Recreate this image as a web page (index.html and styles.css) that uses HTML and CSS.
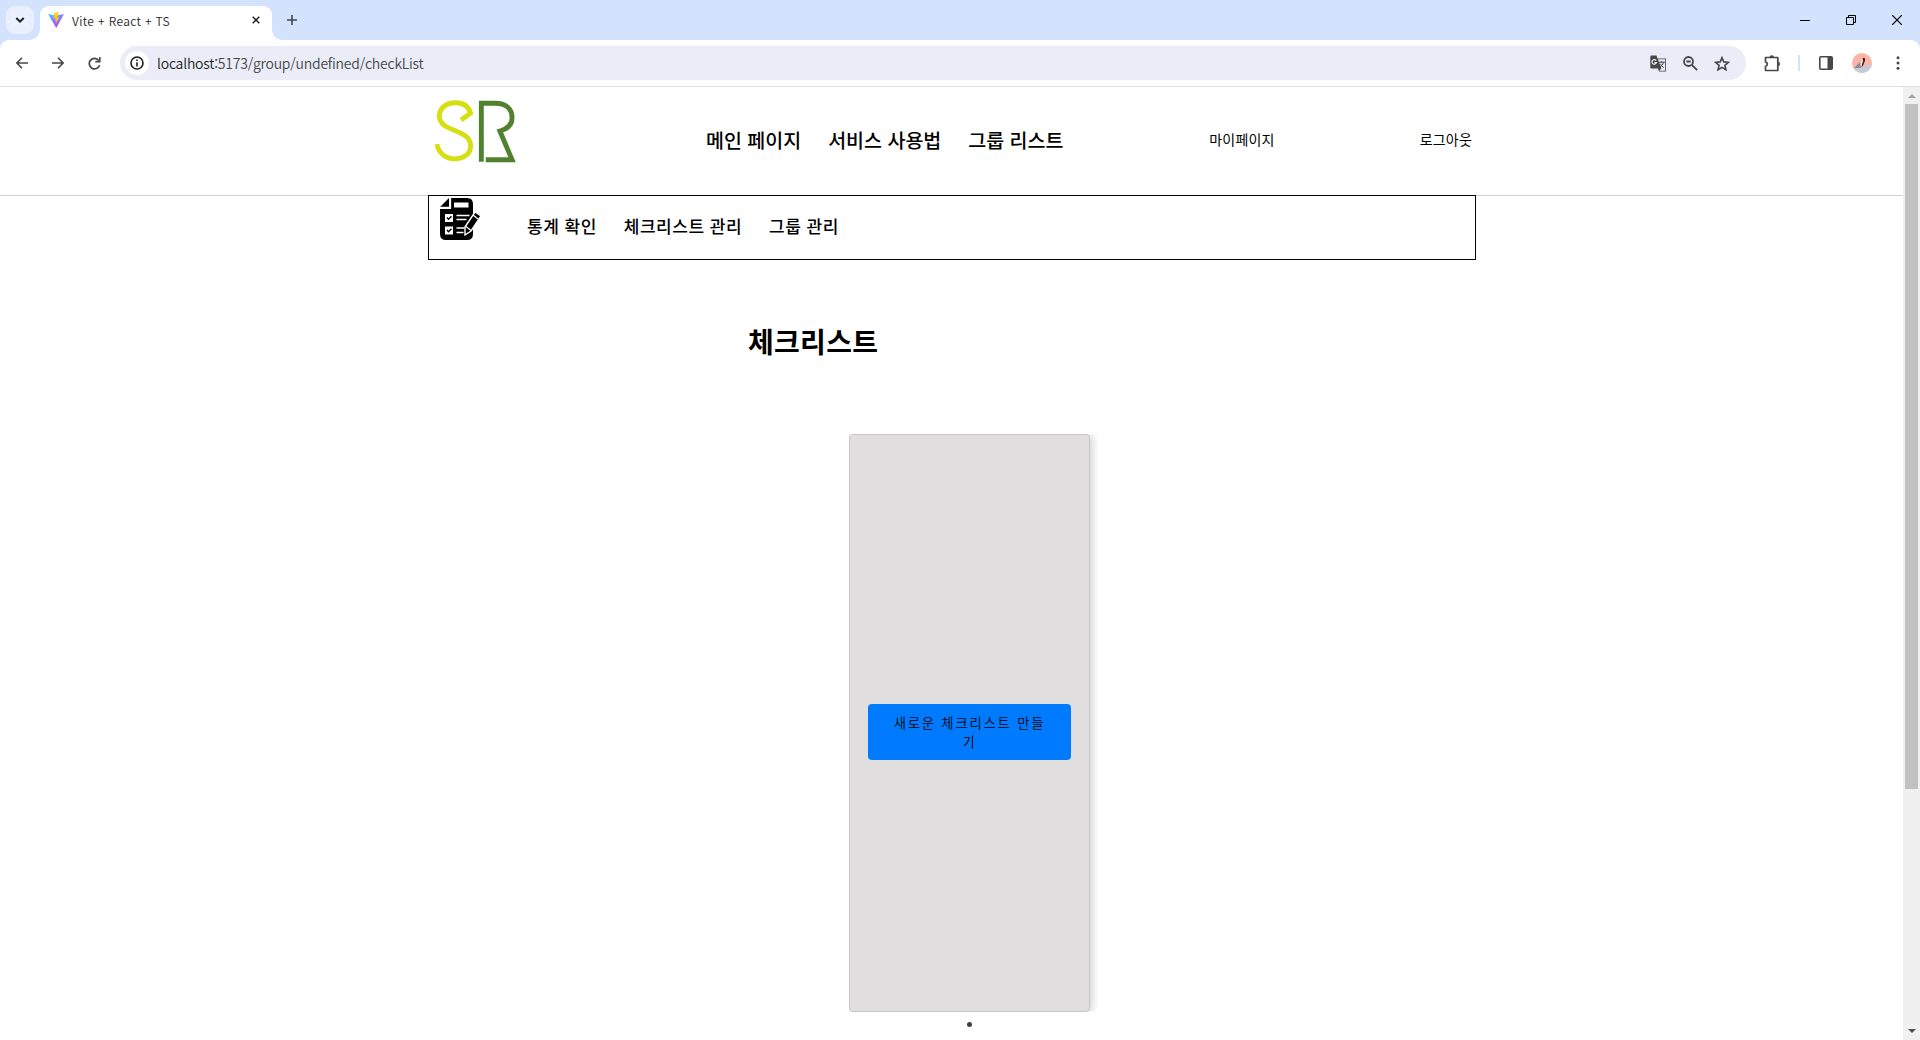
FILE: index.html
```html
<!DOCTYPE html>
<html lang="ko">
<head>
<meta charset="utf-8">
<title>Vite + React + TS</title>
<link rel="stylesheet" href="styles.css">
</head>
<body>
<div class="browser">
  <div class="tabstrip">
    <div class="tab-search"><svg width="10" height="6" viewBox="0 0 10 6"><path d="M1.3 1l3.7 3.6L8.7 1" fill="none" stroke="#1f1f1f" stroke-width="2"/></svg></div>
    <div class="tab">
      <svg class="favicon" width="16" height="16" viewBox="0 0 32 32"><defs><linearGradient id="v" x1="0" y1="0" x2=".6" y2="1"><stop offset="0" stop-color="#41d1ff"/><stop offset="1" stop-color="#bd34fe"/></linearGradient><linearGradient id="y" x1="0" y1="0" x2="0" y2="1"><stop offset="0" stop-color="#ffdd35"/><stop offset="1" stop-color="#ffa800"/></linearGradient></defs><path d="M0 4l16 3 16-3-15.500 28z" fill="url(#v)"/><path d="M22 0L12 2l-.7 11 4-.8-1.200 6 3-1L15 25l8-14-4 .7z" fill="url(#y)"/></svg>
      <span class="tab-title">Vite + React + TS</span>
      <svg class="tab-close" width="8" height="8" viewBox="0 0 8 8"><path d="M.7.700l6.600 6.600M7.300.700L.7 7.300" stroke="#1f1f1f" stroke-width="1.500"/></svg>
    </div>
    <svg class="new-tab" width="10" height="10" viewBox="0 0 10 10"><path d="M5 0v10M0 5h10" stroke="#474747" stroke-width="1.600"/></svg>
    <div class="window-buttons">
      <svg width="10" height="10" viewBox="0 0 10 10"><path d="M0 5.500h10" stroke="#000"/></svg>
      <svg width="10" height="10" viewBox="0 0 10 10"><path d="M.5 2.500h7v7h-7zM2.500 2.500v-2h7v7h-2" fill="none" stroke="#000"/></svg>
      <svg width="10" height="10" viewBox="0 0 10 10"><path d="M0 0l10 10M10 0L0 10" stroke="#000" stroke-width="1.200"/></svg>
    </div>
  </div>
  <div class="toolbar">
    <div class="nav-icons">
      <svg width="12" height="12" viewBox="0 0 12 12"><path d="M12 6H1.200M6 .7L.9 6 6 11.300" fill="none" stroke="#474747" stroke-width="1.600"/></svg>
      <svg width="12" height="12" viewBox="0 0 12 12"><path d="M0 6h10.800M6 .7L11.100 6 6 11.300" fill="none" stroke="#474747" stroke-width="1.600"/></svg>
      <svg width="13" height="13" viewBox="0 0 13 13"><path d="M11.600 8.300A5.300 5.300 0 1 1 10.800 3.400" fill="none" stroke="#474747" stroke-width="1.700"/><path d="M12.600 0v5.400H7.300V3.800H11V0z" fill="#474747"/></svg>
    </div>
    <div class="omnibox">
      <div class="site-info"><svg width="14" height="14" viewBox="0 0 14 14"><circle cx="7" cy="7" r="6" fill="none" stroke="#1f1f1f" stroke-width="1.600"/><path d="M7 6.200v4.300M7 3.500v1.600" stroke="#1f1f1f" stroke-width="1.600"/></svg></div>
      <span class="url"><b>localhost:</b>5173/group/undefined/checkList</span>
      <div class="page-actions">
        <svg width="17" height="17" viewBox="0 0 17 17"><path d="M1.500.500h5l1 3H16v13H9l-1-3H1.500q-1.200 0-1.200-1.200V1.700Q.3.500 1.500.500z" fill="#474747"/><path d="M8 4.200h7.200v11.500H9.300l2-2.200z" fill="#eaedf7"/><path d="M6.200 5.600a2.300 2.300 0 1 0 .3 2H4.500" fill="none" stroke="#eaedf7" stroke-width="1.200"/><path d="M9 7.200h6M11.700 6v1.200M13.700 7.200q-.8 3-3.700 5M10.300 8.700q1 2.200 3.500 4" fill="none" stroke="#474747"/></svg>
        <svg width="15" height="15" viewBox="0 0 15 15"><circle cx="5.500" cy="5.500" r="4.500" fill="none" stroke="#474747" stroke-width="1.800"/><path d="M3.300 5.500h4.400M8.800 8.800l5.400 5.400" stroke="#474747" stroke-width="1.800"/></svg>
        <svg width="16" height="15" viewBox="0 0 16 15"><path d="M8 1.700l1.800 4.200 4.600.4-3.500 3 1.100 4.500L8 11.400l-4 2.400 1.100-4.500-3.500-3 4.600-.4z" fill="none" stroke="#474747" stroke-width="1.600"/></svg>
      </div>
    </div>
    <svg class="extensions" width="17" height="17" viewBox="0 0 17 17"><path d="M1.500 2.500h12.300v13H1.500v-4.200a2.300 2.300 0 0 0 0-4.500z" fill="none" stroke="#474747" stroke-width="1.700" stroke-linejoin="round"/><path d="M5.700 2.500a2 2 0 0 1 4 0zM13.800 6.900a2 2 0 0 1 0 4z" fill="#474747" stroke="#474747" stroke-width=".6"/></svg>
    <span class="divider"></span>
    <svg class="side-panel" width="14" height="14" viewBox="0 0 14 14"><rect x=".8" y=".8" width="12.400" height="12.400" rx="1" fill="none" stroke="#474747" stroke-width="1.600"/><path d="M8.500 1H13v12H8.500z" fill="#474747"/></svg>
    <svg class="avatar" width="20" height="20" viewBox="0 0 20 20"><clipPath id="c"><circle cx="10" cy="10" r="10"/></clipPath><g clip-path="url(#c)"><path fill="#fdb5a8" d="M0 0h20v20H0z"/><path fill="#c5cad9" d="M0 14l8 1 12-4v9H0z"/><path fill="#8d8c94" d="M2 15l6-6 1 6z"/><path d="M10.500 5.500q2-1.500 2.500.500.300 2-1 4-.5 2.500-2.500 4.500 0-2.500 1-4.500 1.300-2 .5-3.500z" fill="#222"/><path d="M9.300 8q.7 2-.3 5" stroke="#eee" fill="none"/></g></svg>
    <svg class="menu" width="4" height="14" viewBox="0 0 4 14"><g fill="#474747"><circle cx="2" cy="1.700" r="1.500"/><circle cx="2" cy="7" r="1.500"/><circle cx="2" cy="12.300" r="1.500"/></g></svg>
  </div>
</div>
<div class="viewport">
  <div class="page">
    <header class="header">
      <div class="header-inner">
        <svg class="logo" width="84" height="66" viewBox="0 0 84 66"><path d="M27.700 21.200l9.700-7C35.500 7 29.500 3.500 22 3.500 13 3.500 5.500 8.500 5.500 17.500c0 16.500 32 12 32 30.500 0 7.500-6.500 13-16 13S4.500 55 3 46" fill="none" stroke="#d5df12" stroke-width="5"/><path d="M48.500 64V4h14c11 0 17.500 5.500 17.500 15 0 7-5 11.500-12.500 13.500L80 62H53" fill="none" stroke="#4f812f" stroke-width="5"/></svg>
        <nav class="main-nav"><a>메인 페이지</a><a>서비스 사용법</a><a>그룹 리스트</a></nav>
        <div class="account"><a>마이페이지</a><a>로그아웃</a></div>
      </div>
    </header>
    <div class="group-bar">
      <svg class="group-icon" width="41" height="42" viewBox="0 0 41 42"><path d="M11 0h16q6 0 6 6v30q0 6-6 6H6q-6 0-6-6V11h11z" fill="#000"/><path d="M0 9L9 0v9z" fill="#000"/><path d="M10.500 0v9.500H0" fill="none" stroke="#fff" stroke-width="1.300"/><path d="M14 4.500h14.500v5H14zM5 16h8v8H5zM5 28.500h8v8H5z" fill="#fff"/><path d="M7 19.500l1.500 1.700 3-3M7 32l1.500 1.700 3-3" fill="none" stroke="#000" stroke-width="1.400"/><path d="M16.500 17.500h13M16.500 21.500h10M16.500 30h8M16.500 34.500h7" stroke="#fff" stroke-width="1.300"/><path d="M25 29L35 14l6 4-10 15-6 4z" fill="#000" stroke="#fff" stroke-width="1.400"/><path d="M26 28.500l5 4M33 17l5 4" stroke="#fff" stroke-width="1.200"/></svg>
      <nav class="group-nav"><a>통계 확인</a><a>체크리스트 관리</a><a>그룹 관리</a></nav>
    </div>
    <main class="content">
      <h1 class="title">체크리스트</h1>
      <div class="slide"><div class="card"><button class="create">새로운 체크리스트 만들<br>기</button></div></div>
      <div class="dot"></div>
    </main>
  </div>
  <div class="scrollbar">
    <svg width="8" height="4" viewBox="0 0 8 4"><path d="M0 4l4-4 4 4z" fill="#a3a3a3"/></svg>
    <div class="thumb"></div>
    <svg class="down" width="8" height="4" viewBox="0 0 8 4"><path d="M0 0l4 4 4-4z" fill="#505050"/></svg>
  </div>
</div>
</body>
</html>
```
FILE: styles.css
```css
* { box-sizing: border-box; }
body { margin: 0; width: 1920px; height: 1040px; overflow: hidden; background: #fff; color: #000; font-family: "Noto Sans CJK KR", "Noto Sans", sans-serif; }
svg { display: block; flex: none; }
a { white-space: nowrap; }

.browser { background: #d3e3fd; height: 87px; }
.tabstrip { display: flex; height: 40px; align-items: center; }
.tab-search { width: 28px; height: 28px; margin-left: 6px; border-radius: 9px; background: #e9f1fe; display: flex; align-items: center; justify-content: center; }
.tab { position: relative; display: flex; align-items: center; width: 232px; height: 34px; margin: 6px 0 0 6px; padding: 0 12px 6px 8px; border-radius: 9px 9px 0 0; background: #fff; }
.tab::before, .tab::after { content: ""; position: absolute; bottom: 0; width: 10px; height: 10px; }
.tab::before { left: -10px; background: radial-gradient(circle at 0 0, transparent 9.500px, #fff 10px); }
.tab::after { right: -10px; background: radial-gradient(circle at 100% 0, transparent 9.500px, #fff 10px); }
.tab-title { margin-left: 8px; font-size: 12px; font-weight: 350; color: #1f1f1f; letter-spacing: .35px; white-space: nowrap; }
.tab-close { margin-left: auto; }
.new-tab { margin-left: 15px; }
.window-buttons { display: flex; gap: 36px; margin-left: auto; padding-right: 18px; }

.toolbar { display: flex; align-items: center; height: 47px; padding-left: 16px; padding-right: 20px; background: #fff; border-bottom: 1px solid #dcdfe3; border-radius: 9px 9px 0 0; }
.nav-icons { display: flex; gap: 24px; align-items: center; width: 104px; }
.omnibox { display: flex; align-items: center; width: 1626px; height: 34px; padding: 0 16px 0 5px; border-radius: 17px; background: #eaedf7; }
.site-info { width: 24px; height: 24px; border-radius: 50%; background: #fff; display: flex; align-items: center; justify-content: center; }
.url { margin-left: 8px; font-size: 14px; font-weight: 350; color: #474747; white-space: nowrap; letter-spacing: -.22px; }
.url b { font-weight: inherit; color: #1f1f1f; }
.page-actions { display: flex; align-items: center; gap: 16px; margin-left: auto; }
.extensions { margin-left: 18px; }
.divider { width: 2px; height: 16px; margin-left: 17px; background: #d3e3fd; }
.side-panel { margin-left: 19px; }
.avatar { margin-left: 19px; }
.menu { margin-left: auto; }

.viewport { display: flex; height: 953px; }
.page { flex: 1; background: #fff; }
.header { height: 109px; border-bottom: 1px solid #d3d3d3; }
.header-inner { display: flex; width: 1048px; height: 108px; margin-left: 428px; padding-bottom: 4px; align-items: center; }
.logo { width: 82px; height: 65px; margin: -15px 0 0 6px; }
.main-nav { display: flex; gap: 27px; margin-left: 190px; font-size: 19.500px; font-weight: 500; }
.account { display: flex; margin-left: auto; gap: 145px; padding-right: 4px; font-size: 14px; letter-spacing: .2px; }

.group-bar { display: flex; width: 1048px; height: 65px; margin: -1px 0 0 428px; border: 1px solid #000; background: #fff; }
.group-icon { margin: 2px 0 0 11px; }
.group-nav { display: flex; align-items: center; gap: 27px; margin-left: 46px; padding-bottom: 4px; font-size: 17px; font-weight: 500; letter-spacing: .5px; }

.content { display: flex; flex-direction: column; }
.title { margin: 58px 0 0 748px; height: 46px; line-height: 46px; font-size: 28px; font-weight: 600; letter-spacing: .3px; }
.slide { width: 249px; height: 578px; margin: 70px 0 0 849px; overflow: hidden; }
.card { display: flex; align-items: center; justify-content: center; width: 241px; height: 578px; padding-top: 18px; border: 1px solid #c8c7c8; border-radius: 4px; background: #e0dedf; box-shadow: 2px 0 10px rgba(0, 0, 0, .2); }
.create { width: 203px; height: 56px; padding: 0; border: 0; border-radius: 4px; background: #007bff; color: #000; font-family: inherit; font-size: 13.333px; font-weight: 350; line-height: 19px; letter-spacing: 1.800px; }
.dot { width: 5px; height: 5px; margin: 10px 0 0 967px; border-radius: 50%; background: #404040; }

.scrollbar { display: flex; flex-direction: column; align-items: center; width: 17px; padding: 7px 0; background: #f0f0f0; }
.thumb { width: 13px; height: 685px; margin-top: 6px; background: #c1c1c1; }
.down { margin-top: auto; }
```
